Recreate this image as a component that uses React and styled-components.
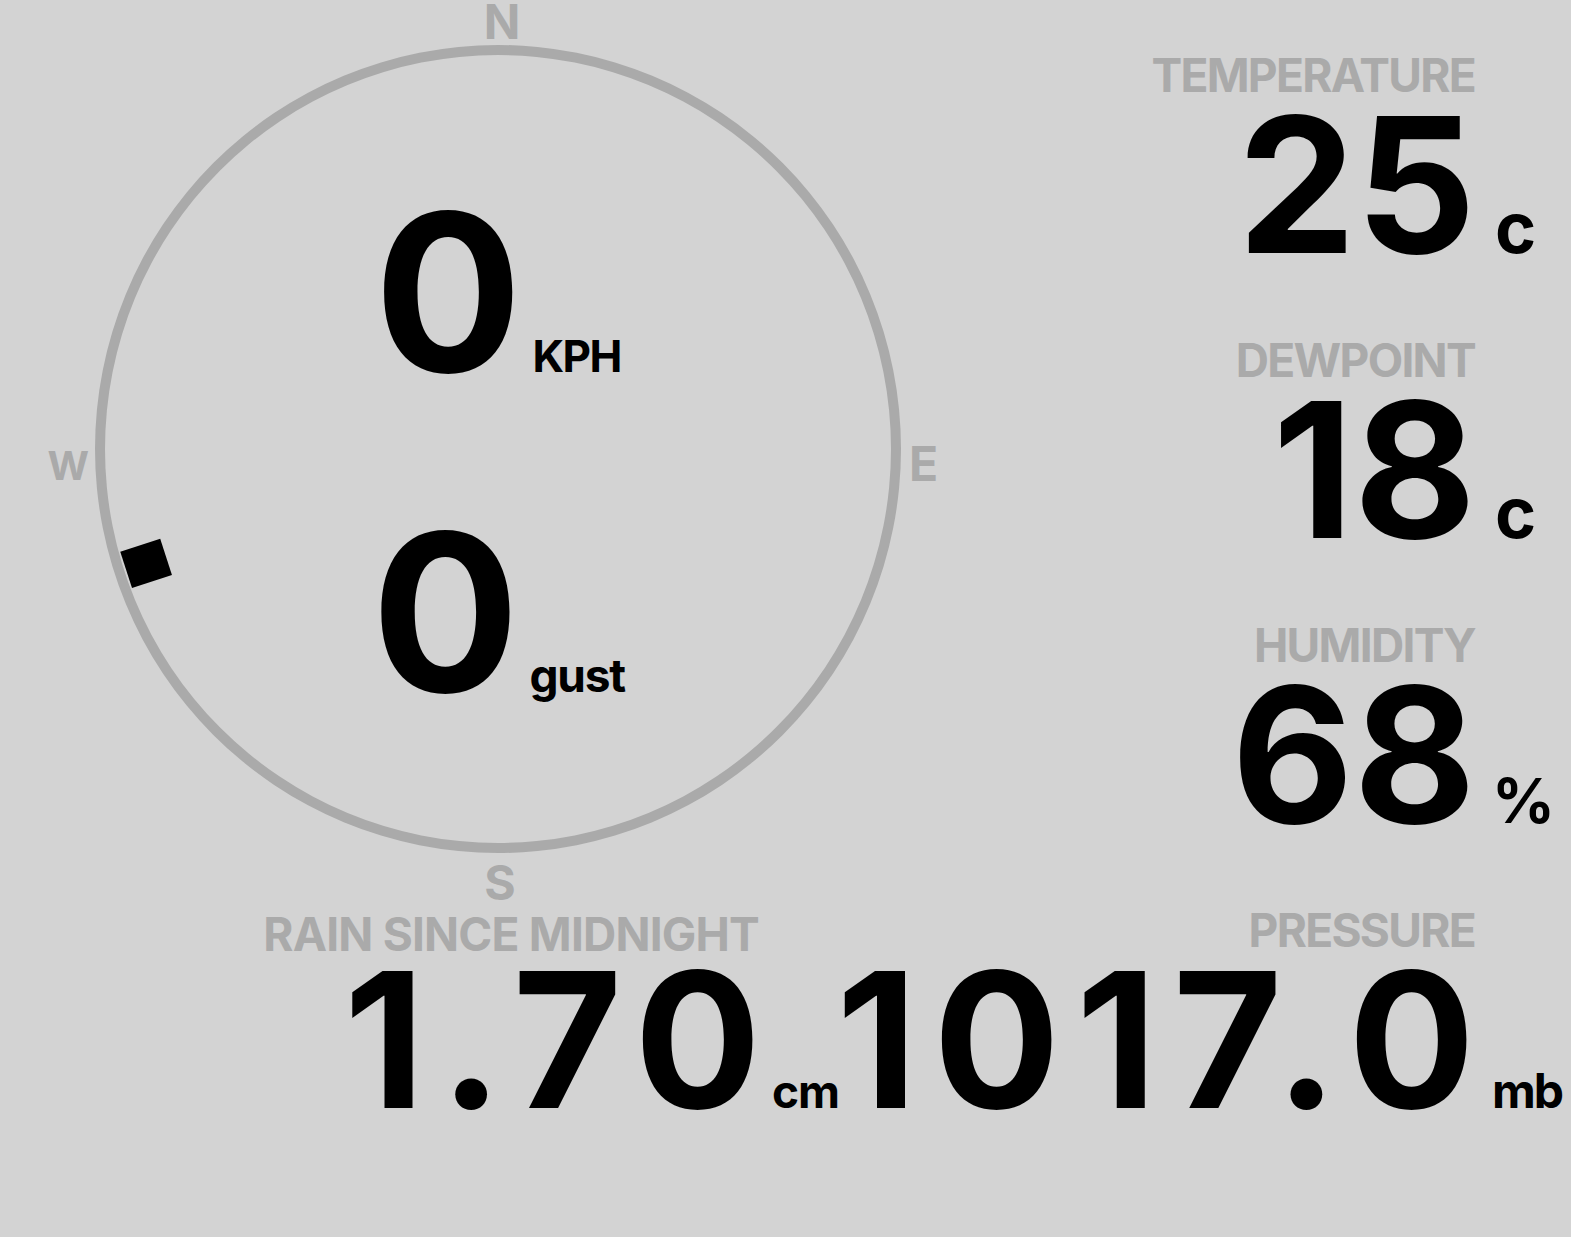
import React from "react";
import styled, { createGlobalStyle } from "styled-components";

const GlobalStyle = createGlobalStyle`
  html, body {
    margin: 0;
    padding: 0;
    background: #d3d3d3;
  }
  body {
    font-family: Inter, "Noto Sans", "DejaVu Sans", sans-serif;
    font-weight: 700;
    color: #000;
  }
`;

const Page = styled.div`
  width: 1571px;
  height: 1237px;
  display: grid;
  grid-template-columns: 960px 512px;
  overflow: hidden;
`;

const LeftColumn = styled.div`
  display: flex;
  flex-direction: column;
`;

const Compass = styled.div`
  display: grid;
  grid-template-columns: 95px 806px 1fr;
  grid-template-rows: 45px 808px 1fr;
  height: 905px;
`;

const Cardinal = styled.div`
  color: #aaa;
  font-size: ${(p) => p.$size || 48}px;
  line-height: 40px;
  display: flex;
  justify-content: ${(p) => p.$justify || "center"};
  align-items: ${(p) => p.$align || "center"};
  grid-column: ${(p) => p.$col};
  grid-row: ${(p) => p.$row};
  padding: ${(p) => p.$pad || "0"};
`;

const Ring = styled.div`
  grid-column: 2;
  grid-row: 2;
  position: relative;
  box-sizing: border-box;
  border: 10px solid #aaa;
  border-radius: 50%;
  display: flex;
  flex-direction: column;
  align-items: center;
  justify-content: center;
  padding-top: 6px;
`;

const SpeedRow = styled.div`
  display: flex;
  align-items: baseline;
  margin-left: ${(p) => p.$shift || 0}px;
`;

const SpeedValue = styled.span`
  font-size: 220px;
  line-height: 320px;
  letter-spacing: -2px;
`;

const SpeedUnit = styled.span`
  font-size: ${(p) => p.$size || 44}px;
  letter-spacing: ${(p) => p.$ls || -1.5}px;
  margin-left: ${(p) => p.$gap || 16}px;
`;

const Marker = styled.div`
  position: absolute;
  left: 50%;
  top: 50%;
  width: 38px;
  height: 42px;
  margin-left: -19px;
  margin-top: -21px;
  background: #000;
`;

const Stat = styled.div`
  display: flex;
  flex-direction: column;
  align-items: flex-end;
  width: ${(p) => p.$width || "auto"};
  margin-top: ${(p) => p.$mt || 0}px;
  margin-bottom: ${(p) => p.$mb || 0}px;
`;

const Label = styled.div`
  color: #aaa;
  font-size: 46px;
  line-height: 50px;
  letter-spacing: ${(p) => p.$ls ?? -0.8}px;
  margin-right: ${(p) => p.$trim ?? -1}px;
  white-space: nowrap;
`;

const ValueRow = styled.div`
  display: flex;
  align-items: baseline;
  justify-content: flex-end;
  white-space: nowrap;
`;

const Value = styled.span`
  font-size: 188px;
  line-height: ${(p) => p.$lh || 170}px;
  letter-spacing: ${(p) => p.$ls || 0}px;
  margin-right: ${(p) => -(p.$ls || 0) - (p.$trim ?? 4)}px;
`;

const Unit = styled.span`
  display: inline-block;
  width: 0;
  overflow: visible;
  white-space: nowrap;
  font-size: ${(p) => p.$size || 50}px;
  letter-spacing: ${(p) => p.$ls || 0}px;
  text-indent: ${(p) => p.$indent || 23}px;
`;

const RightColumn = styled.div`
  display: flex;
  flex-direction: column;
  align-items: flex-end;
  padding-top: 50px;
`;

function StatBlock({ label, value, unit, unitSize, unitLs, ls, trim, indent }) {
  return (
    <Stat $mb={65}>
      <Label $ls={-1.7} $trim={-3}>
        {label}
      </Label>
      <ValueRow>
        <Value $ls={ls} $trim={trim}>
          {value}
        </Value>
        <Unit $size={unitSize} $ls={unitLs} $indent={indent}>
          {unit}
        </Unit>
      </ValueRow>
    </Stat>
  );
}

export default function App() {
  const bearing = 252;
  const radius = 370;
  return (
    <>
      <GlobalStyle />
      <Page>
        <LeftColumn>
          <Compass>
            <Cardinal $col={2} $row={1} $align="flex-start" $pad="2px 0 0 8px">
              N
            </Cardinal>
            <Cardinal $col={1} $row={2} $size={40} $justify="flex-end" $pad="34px 6px 0 0">
              W
            </Cardinal>
            <Ring>
              <SpeedRow $shift={-1}>
                <SpeedValue>0</SpeedValue>
                <SpeedUnit $gap={12}>KPH</SpeedUnit>
              </SpeedRow>
              <SpeedRow $shift={0}>
                <SpeedValue>0</SpeedValue>
                <SpeedUnit $size={46} $ls={-1.3} $gap={12}>
                  gust
                </SpeedUnit>
              </SpeedRow>
              <Marker
                style={{
                  transform: `rotate(${bearing}deg) translateY(-${radius}px)`,
                }}
              />
            </Ring>
            <Cardinal $col={3} $row={2} $justify="flex-start" $pad="30px 0 0 8px">
              E
            </Cardinal>
            <Cardinal $col={2} $row={3} $align="flex-start" $pad="10px 0 0 4px">
              S
            </Cardinal>
          </Compass>
          <Stat $width="758px" $mt={4}>
            <Label>RAIN SINCE MIDNIGHT</Label>
            <ValueRow>
              <Value $lh={162} $ls={15} $trim={3}>
                1.70
              </Value>
              <Unit $size={46} $ls={-1} $indent={14}>
                cm
              </Unit>
            </ValueRow>
          </Stat>
        </LeftColumn>
        <RightColumn>
          <StatBlock label="TEMPERATURE" value="25" unit="c" unitSize={70} />
          <StatBlock label="DEWPOINT" value="18" unit="c" unitSize={70} />
          <StatBlock label="HUMIDITY" value="68" unit="%" unitSize={62} indent={20} />
          <StatBlock
            label="PRESSURE"
            value="1017.0"
            unit="mb"
            unitSize={48}
            unitLs={-2}
            ls={16}
            trim={3}
            indent={20}
          />
        </RightColumn>
      </Page>
    </>
  );
}
